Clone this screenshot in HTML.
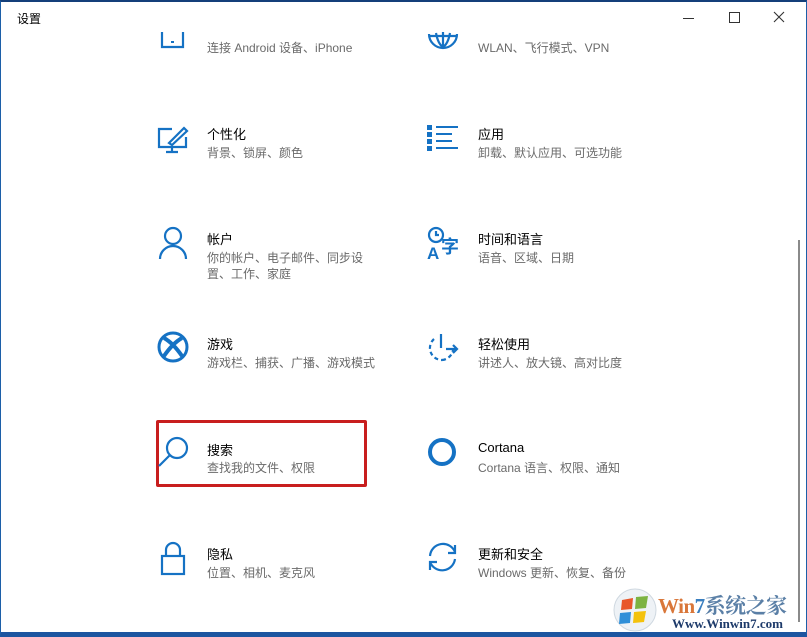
<!DOCTYPE html>
<html><head><meta charset="utf-8"><style>
body{margin:0;width:807px;height:637px;overflow:hidden;background:#fff;font-family:"Liberation Sans","Noto Sans CJK SC",sans-serif;position:relative}
.frame{position:absolute;inset:0;border:1px solid #1c5fa8;border-top:2px solid #143f7a;border-bottom:5px solid #1c55a0;box-sizing:border-box}
.t{position:absolute;font-size:13px;color:#000;white-space:nowrap}
.s{position:absolute;font-size:12px;color:#6a6a6a;white-space:nowrap;line-height:16px}
svg{position:absolute}
.ic{stroke:#1572c4;fill:none;stroke-width:2.2}
</style></head><body>
<div class="frame"></div>
<div class="t" style="left:17px;top:10px;font-size:12px">设置</div>
<div style="position:absolute;left:683px;top:18px;width:11px;height:1px;background:#333"></div>
<div style="position:absolute;left:729px;top:12px;width:9px;height:9px;border:1px solid #333"></div>
<svg style="left:773px;top:11px" width="12" height="12"><path d="M1 1L11 11M11 1L1 11" stroke="#333" stroke-width="1.1"/></svg>
<div style="position:absolute;left:798px;top:240px;width:2px;height:382px;background:#8a8a8a"></div>

<svg style="left:160px;top:30px" width="26" height="20"><path class="ic" d="M2 2V17H23V2"/><rect x="11" y="11" width="3" height="2" fill="#1572c4"/></svg>
<div class="s" style="left:207px;top:40px">连接 Android 设备、iPhone</div>
<svg style="left:426px;top:30px" width="34" height="20"><path class="ic" d="M3 4A14 14 0 0 0 31 4M3 6H31M17 2V17M10 3Q12 14 17 17M24 3Q22 14 17 17"/></svg>
<div class="s" style="left:478px;top:40px">WLAN、飞行模式、VPN</div>

<svg style="left:157px;top:125px" width="32" height="30"><path class="ic" d="M15 4H2V22H29V12"/><path class="ic" d="M15 26V22M9 27H21"/><path class="ic" d="M12 18L27 3L30 6L15 20Z"/></svg>
<div class="t" style="left:207px;top:124px">个性化</div>
<div class="s" style="left:207px;top:145px">背景、锁屏、颜色</div>
<svg style="left:426px;top:123px" width="34" height="30"><g fill="#1572c4"><rect x="1" y="2" width="5" height="5"/><rect x="1" y="9" width="5" height="5"/><rect x="1" y="16" width="5" height="5"/><rect x="1" y="23" width="5" height="5"/><rect x="10" y="3" width="22" height="2"/><rect x="10" y="10" width="16" height="2"/><rect x="10" y="17" width="16" height="2"/><rect x="10" y="24" width="22" height="2"/></g></svg>
<div class="t" style="left:478px;top:124px">应用</div>
<div class="s" style="left:478px;top:145px">卸载、默认应用、可选功能</div>

<svg style="left:158px;top:226px" width="30" height="34"><circle class="ic" cx="15" cy="10" r="8"/><path class="ic" d="M2 33A13 13 0 0 1 28 33"/></svg>
<div class="t" style="left:207px;top:229px">帐户</div>
<div class="s" style="left:207px;top:250px">你的帐户、电子邮件、同步设<br>置、工作、家庭</div>
<svg style="left:426px;top:226px" width="36" height="34"><circle class="ic" cx="10" cy="9" r="7"/><path class="ic" d="M10 5V9H13"/><text x="1" y="33" font-size="17" font-weight="bold" fill="#1572c4" font-family="Liberation Sans">A</text><text x="15" y="27" font-size="18" font-weight="bold" fill="#1572c4" font-family="Noto Sans CJK SC">字</text></svg>
<div class="t" style="left:478px;top:229px">时间和语言</div>
<div class="s" style="left:478px;top:250px">语音、区域、日期</div>

<svg style="left:157px;top:331px" width="32" height="32"><circle cx="16" cy="16" r="14" fill="none" stroke="#1572c4" stroke-width="3"/><path d="M7 7Q16 12 25 25M25 7Q16 12 7 25" stroke="#1572c4" stroke-width="4" fill="none"/></svg>
<div class="t" style="left:207px;top:334px">游戏</div>
<div class="s" style="left:207px;top:355px">游戏栏、捕获、广播、游戏模式</div>
<svg style="left:426px;top:331px" width="34" height="32"><path class="ic" d="M8 8A12 12 0 0 0 16 29" stroke-dasharray="4 3"/><path class="ic" d="M16 29A12 12 0 0 0 27 19" stroke-dasharray="4 3"/><path class="ic" d="M15 3V17M20 18H31M27 14L31 18L27 22"/></svg>
<div class="t" style="left:478px;top:334px">轻松使用</div>
<div class="s" style="left:478px;top:355px">讲述人、放大镜、高对比度</div>

<div style="position:absolute;left:156px;top:420px;width:205px;height:61px;border:3px solid #c81e1e;border-radius:2px"></div>
<svg style="left:157px;top:435px" width="34" height="34"><circle class="ic" cx="20" cy="13" r="10"/><path class="ic" d="M13 20L2 31"/></svg>
<div class="t" style="left:207px;top:440px">搜索</div>
<div class="s" style="left:207px;top:460px">查找我的文件、权限</div>
<svg style="left:426px;top:436px" width="34" height="34"><circle cx="16" cy="16" r="12" fill="none" stroke="#1572c4" stroke-width="4"/></svg>
<div class="t" style="left:478px;top:440px">Cortana</div>
<div class="s" style="left:478px;top:460px">Cortana 语言、权限、通知</div>

<svg style="left:160px;top:541px" width="26" height="36"><path class="ic" d="M6 15V9A7 7 0 0 1 20 9V15"/><rect class="ic" x="2" y="15" width="22" height="18"/></svg>
<div class="t" style="left:207px;top:544px">隐私</div>
<div class="s" style="left:207px;top:565px">位置、相机、麦克风</div>
<svg style="left:426px;top:541px" width="34" height="34"><path class="ic" d="M4 15A13 13 0 0 1 29 11M4 21A13 13 0 0 0 29 18"/><path class="ic" d="M29 4V12H22M4 29V21H11"/></svg>
<div class="t" style="left:478px;top:544px">更新和安全</div>
<div class="s" style="left:478px;top:565px">Windows 更新、恢复、备份</div>

<svg style="left:610px;top:588px" width="50" height="45"><circle cx="25" cy="22" r="21" fill="#eef2f6" stroke="#cfd8e0"/><path d="M12 12L23 10L22 21L11 22Z" fill="#e8572a"/><path d="M26 9L38 8L36 20L25 21Z" fill="#7cb342"/><path d="M10 25L21 24L20 35L9 36Z" fill="#2f8fd8"/><path d="M24 24L36 23L34 34L23 35Z" fill="#f4c20d"/></svg>
<div style="position:absolute;left:658px;top:590px;font-family:'Liberation Serif','Noto Serif CJK SC',serif;font-weight:bold;font-size:21px;color:#d9773a;white-space:nowrap;letter-spacing:-0.5px">Win<span style="color:#3a7fc0">7</span><span style="color:#5a7fa6">系统之家</span></div>
<div style="position:absolute;left:672px;top:616px;font-family:'Liberation Serif',serif;font-weight:bold;font-size:13px;color:#1d3a6a;white-space:nowrap">Www.Winwin7.com</div>
</body></html>
